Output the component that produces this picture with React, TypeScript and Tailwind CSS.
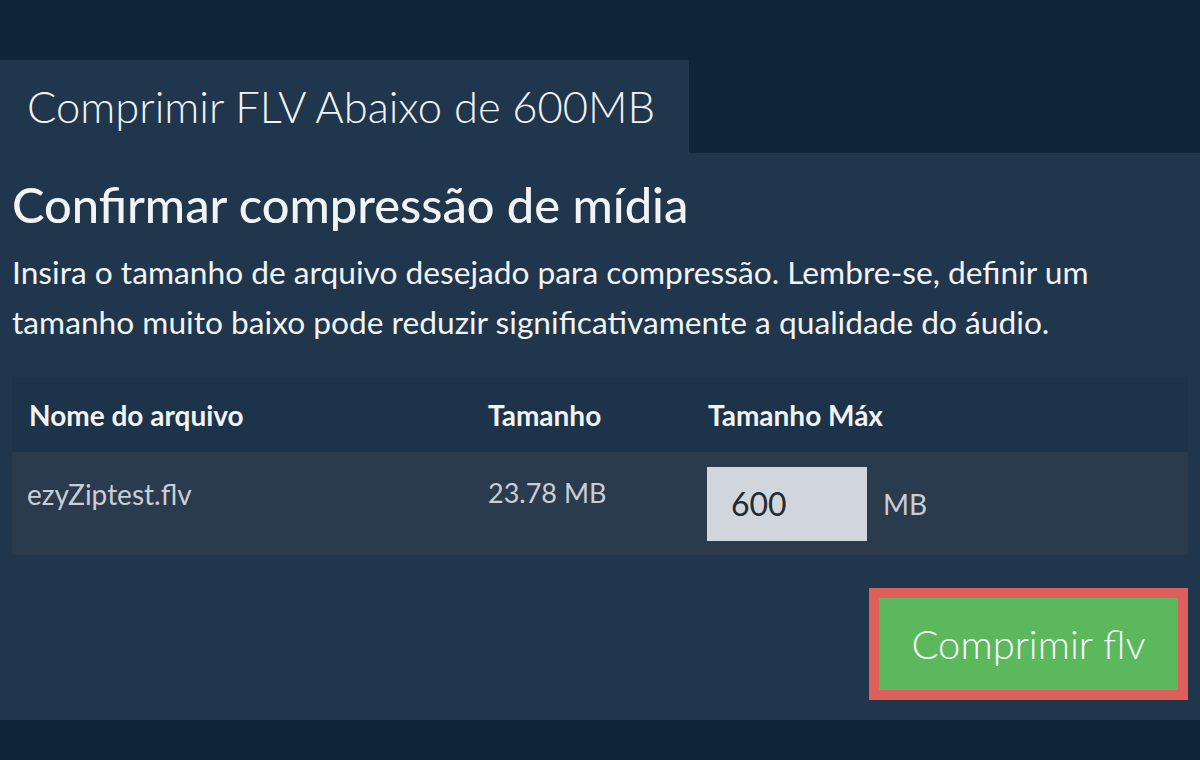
import React, { useState } from 'react';

const App: React.FC = () => {
  const [maxSize, setMaxSize] = useState('600');

  return (
    <div className="min-h-[760px] bg-[#0f2339] pt-[60px] font-['Lato','Noto_Sans',sans-serif]">
      <div className="w-[689px] h-[93px] bg-[#20364d] pl-[27px] flex items-center">
        <h1 className="text-[43.5px] font-light text-[#f1f3f5] leading-none">Comprimir FLV Abaixo de 600MB</h1>
      </div>

      <section className="bg-[#20364d] px-3 pt-[22px] pb-[20px]">
        <h2 className="text-[48.8px] font-medium text-[#f1f3f5] leading-[58px]">Confirmar compressão de mídia</h2>
        <p className="mt-[14px] text-[31.7px] text-[#f1f3f5] leading-[50px]">
          Insira o tamanho de arquivo desejado para compressão. Lembre-se, definir um tamanho muito baixo pode reduzir significativamente a qualidade do áudio.
        </p>

        <table className="mt-[30px] w-full border-collapse text-left">
          <thead>
            <tr className="bg-[#1d3349] h-[75px]">
              <th className="w-[459px] pl-[17px] text-[28px] font-bold text-[#f1f3f5]">Nome do arquivo</th>
              <th className="w-[220px] pl-[17px] text-[28px] font-bold text-[#f1f3f5]">Tamanho</th>
              <th className="pl-[17px] text-[28px] font-bold text-[#f1f3f5]">Tamanho Máx</th>
            </tr>
          </thead>
          <tbody>
            <tr className="bg-[#2a3b4e] h-[103px]">
              <td className="align-top pl-[15px] pt-[21px] text-[28px] text-[#c9ced5]">ezyZiptest.flv</td>
              <td className="align-top pl-[17px] pt-[21px] text-[27px] text-[#c9ced5]">23.78 MB</td>
              <td className="align-middle pl-[16px]">
                <div className="flex items-center gap-4">
                  <input
                    value={maxSize}
                    onChange={e => setMaxSize(e.target.value)}
                    className="w-[160px] h-[74px] bg-[#d1d6dc] pl-[24px] text-[32px] text-[#222a33] outline-none"
                  />
                  <span className="text-[28px] text-[#c9ced5]">MB</span>
                </div>
              </td>
            </tr>
          </tbody>
        </table>

        <div className="mt-[33px] flex justify-end">
          <button className="w-[319px] h-[112px] border-[10px] border-[#dd605c] bg-[#5cb85c] text-[40px] font-light text-white">
            Comprimir flv
          </button>
        </div>
      </section>
    </div>
  );
};

export default App;
